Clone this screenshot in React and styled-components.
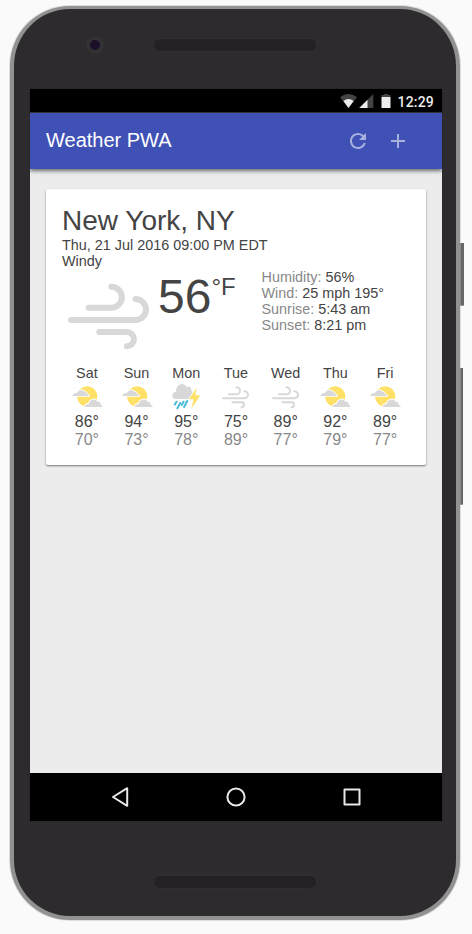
import React from "react";
import styled, { createGlobalStyle } from "styled-components";

const GlobalStyle = createGlobalStyle`
  * { box-sizing: border-box; }
  body { margin: 0; background: #fafafa; font-family: "Liberation Sans", Arial, sans-serif; }
`;

const Stage = styled.main`
  position: relative;
  width: 472px;
  height: 934px;
  padding: 6px 0 0 10px;
  overflow: hidden;
  background: #fafafa;
`;

const Phone = styled.div`
  display: grid;
  grid-template-rows: 80px 732px 95px;
  width: 450px;
  height: 914px;
  padding: 0 14px 0 16px;
  border: 4px solid #919191;
  border-top-width: 3px;
  border-radius: 60px;
  background: #2d2b2d;
  box-shadow: 0 0 0 1px #dcdddc;
`;

const SideButton = styled.div`
  position: absolute;
  left: 460px;
  top: ${(p) => p.$top}px;
  width: ${(p) => p.$width}px;
  height: ${(p) => p.$height}px;
  background: #666;
  border-left: 1px solid #888;
  border-bottom: 1px solid #999;
`;

const Bezel = styled.div`
  position: relative;
  display: flex;
  justify-content: center;
  padding-right: 2px;
  padding-top: ${(p) => p.$top}px;
`;

const Grille = styled.div`
  width: 164px;
  height: 14px;
  border-radius: 7px;
  background: #232123;
  border: 1px solid #302e30;
`;

const Camera = styled.div`
  position: absolute;
  left: 56px;
  top: 27px;
  width: 18px;
  height: 18px;
  border-radius: 50%;
  background: #1b1029;
  border: 4px solid #333133;
`;

const Screen = styled.div`
  display: grid;
  grid-template-rows: 24px 56px 604px 48px;
  width: 412px;
  background: #ececec;
  box-shadow: 0 0 1px #1c1c1c;
`;

const StatusBar = styled.div`
  display: flex;
  justify-content: flex-end;
  padding: 4px 8px 0 0;
  background: #000;
  border-bottom: 1px solid #333;
  color: #ebebeb;
`;

const Clock = styled.span`
  font: 500 14px/18px Roboto, sans-serif;
  letter-spacing: 0.2px;
`;

const Header = styled.header`
  position: relative;
  display: flex;
  align-items: center;
  padding: 0 32px 0 16px;
  background: #3f51b5;
  color: #fff;
  box-shadow: 0 2px 4px rgba(0, 0, 0, 0.55);
  clip-path: inset(0 0 -8px 0);
`;

const Title = styled.h1`
  flex: 1;
  margin: 0 0 2px;
  font-size: 20px;
  line-height: 24px;
  font-weight: 400;
`;

const HeaderButton = styled.button`
  display: flex;
  width: 24px;
  height: 24px;
  margin-left: ${(p) => p.$gap || 0}px;
  padding: 0;
  border: 0;
  background: none;
  color: #a8b0de;
`;

const Content = styled.section`
  padding: 20px 16px;
`;

const Card = styled.article`
  height: 276px;
  padding: 16px;
  border-radius: 2px;
  background: #fff;
  color: #444;
  font-size: 14.4px;
  line-height: 16px;
  box-shadow: 0 1px 2px rgba(0, 0, 0, 0.5);
`;

const Location = styled.h2`
  margin: 0;
  font-size: 28px;
  line-height: 32px;
  font-weight: 400;
`;

const Current = styled.div`
  display: flex;
  height: 96px;
`;

const Visual = styled.div`
  width: 96px;
  height: 80px;
  padding-top: 8px;
`;

const Temperature = styled.div`
  display: flex;
  width: 103.5px;
  font-size: 48px;
  line-height: 56px;
`;

const Scale = styled.span`
  font-size: 24px;
  line-height: 36px;
`;

const Details = styled.dl`
  margin: 0;
`;

const Detail = styled.div`
  display: flex;
  gap: 4px;
`;

const Label = styled.dt`
  color: #888;
`;

const Value = styled.dd`
  margin: 0;
`;

const Forecast = styled.div`
  display: grid;
  grid-template-columns: repeat(7, 1fr);
`;

const Day = styled.div`
  display: flex;
  flex-direction: column;
  align-items: center;
`;

const High = styled.span`
  font-size: 16px;
  line-height: 18px;
`;

const Low = styled(High)`
  color: #888;
`;

const NavBar = styled.nav`
  display: flex;
  align-items: center;
  justify-content: center;
  gap: 92px;
  background: #000;
`;

const Svg = styled.svg`
  display: block;
  flex: none;
`;

const WindPaths = () => (
  <g fill="none" stroke="#d8d8d8" strokeWidth="6" strokeLinecap="round">
    <path d="M26.7 30.7H49.4a10.5 10.5 0 0 0 0-21" />
    <path d="M9 43H73.5a10.5 10.5 0 0 0 0-21" />
    <path d="M37.3 55H64.8a7.15 7.15 0 0 1 0 14.3" />
  </g>
);

const PartlyCloudy = () => (
  <g>
    <circle cx="48.5" cy="46.5" r="30.5" fill="#ffe168" />
    <g fill="#d8d8d8" stroke="#fff" strokeWidth="5" paintOrder="stroke">
      <path d="M3 45C7 38 13 36 18 36C22 26 36 25 39 32C43 31 47 36 48 39C51 39 53 42 54 45Z" />
      <path d="M41 78C43 71 48 68 53 69C56 56 74 49 79 63C87 60 89 67 89 71C92 72 95 75 95 78Z" />
    </g>
  </g>
);

const Thunder = () => (
  <g>
    <path d="M17 54C3 53 3 34 18 32C17 10 41 0 50 18C59 13 66 21 64 29C70 31 69 37 65 39L57 54Z" fill="#d8d8d8" />
    <path d="M80 20L57 55H71L64 83L91 43H76Z" fill="#ffe168" stroke="#fff" strokeWidth="4" paintOrder="stroke" />
    <g stroke="#4cbcd8" strokeWidth="6">
      <path d="M21 60L13 73M32 64L21 84M42 60L34 74M53 58L41 80" />
    </g>
  </g>
);

const drawings = { wind: WindPaths, partly: PartlyCloudy, thunder: Thunder };

const WeatherIcon = ({ kind }) => {
  const Drawing = drawings[kind];
  return (
    <Svg width="32" height="32" viewBox="0 0 96 96">
      <g transform={kind === "wind" ? "translate(0 9)" : undefined}>
        <Drawing />
      </g>
    </Svg>
  );
};

const days = [
  ["Sat", "partly", 86, 70],
  ["Sun", "partly", 94, 73],
  ["Mon", "thunder", 95, 78],
  ["Tue", "wind", 75, 89],
  ["Wed", "wind", 89, 77],
  ["Thu", "partly", 92, 79],
  ["Fri", "partly", 89, 77],
];

const details = [
  ["Humidity:", "56%"],
  ["Wind:", "25 mph 195°"],
  ["Sunrise:", "5:43 am"],
  ["Sunset:", "8:21 pm"],
];

const StatusIcons = () => (
  <Svg width="57" height="18" viewBox="0 0 57 18">
    <path d="M0 4.2Q8.5-2.4 17 4.2L8.5 15Z" fill="#444" />
    <path d="M3.4 8Q8.5 4.2 13.6 8L8.5 15Z" fill="#ececec" />
    <path d="M33.3 1V15H19.3Z" fill="#444" />
    <path d="M27.5 6.8V15H19.3Z" fill="#ececec" />
    <path d="M41.5 2H44V1H48V2H50.5V4H41.5Z" fill="#444" />
    <path d="M41.5 4H50.5V15H41.5Z" fill="#ececec" />
  </Svg>
);

export default function App() {
  return (
    <Stage>
      <GlobalStyle />
      <Phone>
        <Bezel $top={29}>
          <Camera />
          <Grille />
        </Bezel>
        <Screen>
          <StatusBar>
            <StatusIcons />
            <Clock>12:29</Clock>
          </StatusBar>
          <Header>
            <Title>Weather PWA</Title>
            <HeaderButton aria-label="Refresh">
              <Svg width="24" height="24" viewBox="0 0 24 24" fill="currentColor">
                <path d="M17.65 6.35C16.2 4.9 14.21 4 12 4c-4.42 0-7.99 3.58-7.99 8s3.57 8 7.99 8c3.73 0 6.84-2.55 7.73-6h-2.08c-.82 2.33-3.04 4-5.65 4-3.31 0-6-2.69-6-6s2.69-6 6-6c1.66 0 3.14.69 4.22 1.78L13 11h7V4l-2.35 2.35z" />
              </Svg>
            </HeaderButton>
            <HeaderButton aria-label="Add" $gap={16}>
              <Svg width="24" height="24" viewBox="0 0 24 24" fill="currentColor">
                <path d="M19 13h-6v6h-2v-6H5v-2h6V5h2v6h6v2z" />
              </Svg>
            </HeaderButton>
          </Header>
          <Content>
            <Card>
              <Location>New York, NY</Location>
              <div>Thu, 21 Jul 2016 09:00 PM EDT</div>
              <div>Windy</div>
              <Current>
                <Visual>
                  <Svg width="96" height="80" viewBox="0 0 96 80">
                    <WindPaths />
                  </Svg>
                </Visual>
                <Temperature>
                  56<Scale>°F</Scale>
                </Temperature>
                <Details>
                  {details.map(([label, value]) => (
                    <Detail key={label}>
                      <Label>{label}</Label>
                      <Value>{value}</Value>
                    </Detail>
                  ))}
                </Details>
              </Current>
              <Forecast>
                {days.map(([name, icon, high, low]) => (
                  <Day key={name}>
                    <span>{name}</span>
                    <WeatherIcon kind={icon} />
                    <High>{high}°</High>
                    <Low>{low}°</Low>
                  </Day>
                ))}
              </Forecast>
            </Card>
          </Content>
          <NavBar>
            <Svg width="24" height="24" viewBox="0 0 24 24" fill="none" stroke="#e8e8e8" strokeWidth="2" strokeLinejoin="round">
              <path d="M19.2 3.2V20.8L5 12Z" />
            </Svg>
            <Svg width="24" height="24" viewBox="0 0 24 24" fill="none" stroke="#e8e8e8" strokeWidth="2">
              <circle cx="12" cy="12" r="8.6" />
            </Svg>
            <Svg width="24" height="24" viewBox="0 0 24 24" fill="none" stroke="#e8e8e8" strokeWidth="2" strokeLinejoin="round">
              <path d="M4.5 4.5H19.5V19.5H4.5Z" />
            </Svg>
          </NavBar>
        </Screen>
        <Bezel $top={54}>
          <Grille />
        </Bezel>
      </Phone>
      <SideButton $top={243} $width={4} $height={63} />
      <SideButton $top={368} $width={3} $height={137} />
    </Stage>
  );
}
